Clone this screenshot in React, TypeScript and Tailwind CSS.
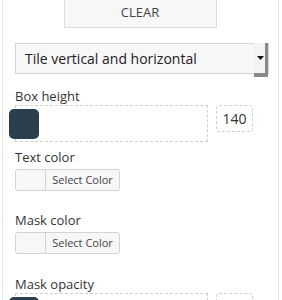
export default function App() {
  return (
    <div className="w-[282px] h-[300px] overflow-hidden bg-white font-['Open_Sans',sans-serif] text-[#333]">
      <div className="ml-[2px] w-[277px] h-[300px] border-x border-[#e5e5e5] pl-[12px] pr-[9px]">
        <div className="flex justify-center pr-[2px]">
          <button className="mt-[-8px] ml-[-2px] w-[153px] h-[36px] pt-[6px] bg-[#f7f7f7] border border-[#dcdcdc] text-[13px] text-[#444]">
            CLEAR
          </button>
        </div>

        <div className="mt-[15px] flex h-[31px] border border-[#d4d4d4] bg-[#f7f7f7]">
          <span className="flex-1 pl-[9px] leading-[29px] text-[14px] text-[#222]">Tile vertical and horizontal</span>
          <span className="relative w-[14px] h-[34px] -mt-[1px] border-r-[3px] border-b-[4px] border-[#8a8a8a] bg-[#f3f3f3]">
            <svg className="absolute left-[3px] top-[13px]" width="7" height="5" viewBox="0 0 7 5">
              <path d="M0 0h7L3.5 4z" fill="#111" />
            </svg>
          </span>
        </div>

        <p className="mt-[13px] text-[13px] leading-[18px]">Box height</p>
        <div className="flex items-start">
          <div className="relative w-[193px] h-[37px] border border-dashed border-[#cfcfcf]">
            <div className="absolute left-[-7px] top-[3px] w-[30px] h-[30px] rounded-[5px] bg-[#2b3e4b]" />
          </div>
          <div className="ml-[8px] w-[37px] h-[27px] border border-dashed border-[#cfcfcf] rounded-[3px] text-center text-[14px] leading-[25px]">
            140
          </div>
        </div>

        <p className="mt-[6px] text-[13px] leading-[18px]">Text color</p>
        <div className="mt-[3px] flex w-[105px] h-[22px] border border-[#d4d4d4] rounded-[3px] bg-[#f7f7f7] overflow-hidden">
          <span className="w-[30px] border-r border-[#d4d4d4]" />
          <span className="flex-1 text-center text-[11px] leading-[20px] text-[#444]">Select Color</span>
        </div>

        <p className="mt-[20px] text-[13px] leading-[18px]">Mask color</p>
        <div className="mt-[3px] flex w-[105px] h-[22px] border border-[#d4d4d4] rounded-[3px] bg-[#f7f7f7] overflow-hidden">
          <span className="w-[30px] border-r border-[#d4d4d4]" />
          <span className="flex-1 text-center text-[11px] leading-[20px] text-[#444]">Select Color</span>
        </div>

        <p className="mt-[21px] text-[13px] leading-[18px]">Mask opacity</p>
        <div className="flex items-start">
          <div className="relative w-[193px] h-[37px] border border-dashed border-[#cfcfcf]">
            <div className="absolute left-[-7px] top-[3px] w-[30px] h-[30px] rounded-[5px] bg-[#2b3e4b]" />
          </div>
          <div className="ml-[8px] w-[37px] h-[27px] border border-dashed border-[#cfcfcf] rounded-[3px]" />
        </div>
      </div>
    </div>
  );
}
